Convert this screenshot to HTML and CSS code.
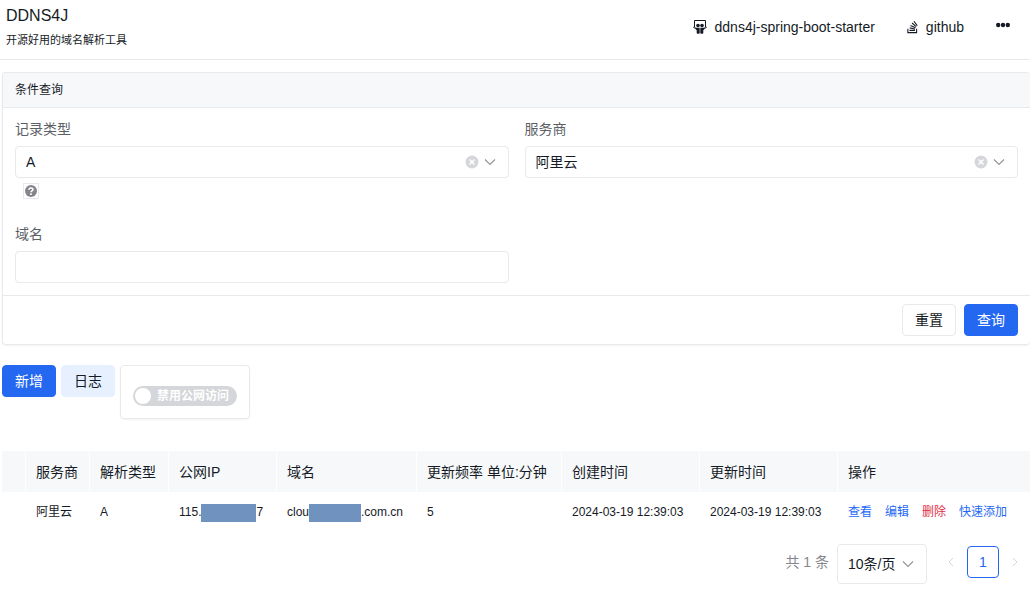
FILE: index.html
```html
<!DOCTYPE html>
<html lang="zh-CN">
<head>
<meta charset="utf-8">
<title>DDNS4J</title>
<link rel="stylesheet" href="styles.css">
</head>
<body>
<header class="header">
  <div class="brand">
    <h1 class="brand-title">DDNS4J</h1>
    <p class="brand-sub">开源好用的域名解析工具</p>
  </div>
  <nav class="nav">
    <a class="nav-link" href="#starter">
      <svg class="nav-icon" width="14" height="14" viewBox="0 0 14 14" aria-hidden="true">
        <path d="M1.500 7.500V.5h11v7" fill="none" stroke="currentColor" stroke-width="1"/>
        <path d="M.3 7.200q1.500 1.300 2.700 1M13.700 7.200q-1.500 1.300-2.700 1" fill="none" stroke="currentColor" stroke-width="1"/>
        <circle cx="5" cy="5.500" r="1.800" fill="currentColor"/><circle cx="9" cy="5.500" r="1.800" fill="currentColor"/>
        <path d="M2.300 7.800h4.400v5.500q-1.400 1-3 0V10.300q-1.400-.8-1.400-2.500zM11.700 7.800H7.300v5.500q1.400 1 3 0V10.300q1.400-.8 1.400-2.500z" fill="currentColor"/>
      </svg>
      <span>ddns4j-spring-boot-starter</span>
    </a>
    <a class="nav-link" href="#github">
      <svg class="nav-icon" width="11" height="14" viewBox="0 0 384 512" aria-hidden="true">
        <path fill="currentColor" d="M290.7 311L95 269.700 86.800 309l195.700 41zm51-87L188.200 95.700l-25.500 30.800 153.500 128.300zm-31.200 39.700L129.200 179l-16.700 36.500L293.700 300zM262 32l-32 24 119.300 160.300 32-24zm20.500 328h-200v39.700h200zm39.700 80H42.700V320h-40v160h359.500V320h-40z"/>
      </svg>
      <span>github</span>
    </a>
    <button class="more" type="button" aria-label="更多">
      <svg width="14" height="6" viewBox="0 0 14 6" aria-hidden="true"><g fill="currentColor"><circle cx="2.200" cy="3" r="2.200"/><circle cx="7" cy="3" r="2.200"/><circle cx="11.800" cy="3" r="2.200"/></g></svg>
    </button>
  </nav>
</header>

<main class="main">
  <form class="panel">
    <h2 class="panel-head">条件查询</h2>
    <div class="panel-body">
      <div class="field">
        <label class="label" for="type">记录类型</label>
        <div class="control">
          <select class="select" id="type"><option>A</option></select>
          <button class="clear" type="button" aria-label="清除记录类型"><svg width="14" height="14" viewBox="0 0 14 14"><circle cx="7" cy="7" r="6.500" fill="#d4d6d9"/><path d="M4.500 4.500l5 5m0-5l-5 5" stroke="#fff" stroke-width="1.500"/></svg></button>
          <svg class="chevron" width="12" height="12" viewBox="0 0 12 12" aria-hidden="true"><path d="M1 3.500l5 5 5-5"/></svg>
        </div>
        <button class="help" type="button" aria-label="帮助"><svg width="12" height="12" viewBox="0 0 12 12"><circle cx="6" cy="6" r="6" fill="#84868c"/><path d="M4 4.800C4 2.400 8 2.400 8 4.600 8 5.900 6 5.800 6 7.200M6 8.300v1.600" fill="none" stroke="#fff" stroke-width="1.600"/></svg></button>
      </div>
      <div class="field">
        <label class="label" for="vendor">服务商</label>
        <div class="control">
          <select class="select" id="vendor"><option>阿里云</option></select>
          <button class="clear" type="button" aria-label="清除服务商"><svg width="14" height="14" viewBox="0 0 14 14"><circle cx="7" cy="7" r="6.500" fill="#d4d6d9"/><path d="M4.500 4.500l5 5m0-5l-5 5" stroke="#fff" stroke-width="1.500"/></svg></button>
          <svg class="chevron" width="12" height="12" viewBox="0 0 12 12" aria-hidden="true"><path d="M1 3.500l5 5 5-5"/></svg>
        </div>
      </div>
      <div class="field">
        <label class="label" for="domain">域名</label>
        <input class="input" id="domain" type="text">
      </div>
    </div>
    <div class="panel-foot">
      <button class="btn" type="reset">重置</button>
      <button class="btn btn-primary" type="button">查询</button>
    </div>
  </form>

  <div class="toolbar">
    <button class="btn btn-primary" type="button">新增</button>
    <button class="btn btn-light" type="button">日志</button>
    <div class="switch-box">
      <label class="switch"><input class="switch-input" type="checkbox" role="switch"><span>禁用公网访问</span></label>
    </div>
  </div>

  <table class="table">
    <colgroup><col class="c-check"><col class="c-vendor"><col class="c-type"><col class="c-ip"><col class="c-domain"><col class="c-freq"><col class="c-time"><col class="c-time"><col></colgroup>
    <thead>
      <tr><th></th><th>服务商</th><th>解析类型</th><th>公网IP</th><th>域名</th><th>更新频率 单位:分钟</th><th>创建时间</th><th>更新时间</th><th>操作</th></tr>
    </thead>
    <tbody>
      <tr>
        <td></td><td>阿里云</td><td>A</td>
        <td>115.<span class="mask mask-ip"></span>7</td>
        <td>clou<span class="mask mask-domain"></span>.com.cn</td>
        <td>5</td><td>2024-03-19 12:39:03</td><td>2024-03-19 12:39:03</td>
        <td><div class="actions"><button class="act" type="button">查看</button><button class="act" type="button">编辑</button><button class="act act-danger" type="button">删除</button><button class="act" type="button">快速添加</button></div></td>
      </tr>
    </tbody>
  </table>

  <div class="pager">
    <span class="total">共 1 条</span>
    <div class="control page-size">
      <select class="select" aria-label="每页条数"><option>10条/页</option></select>
      <svg class="chevron" width="12" height="12" viewBox="0 0 12 12" aria-hidden="true"><path d="M1 3.500l5 5 5-5"/></svg>
    </div>
    <div class="pages">
      <button class="arrow" type="button" disabled aria-label="上一页"><svg width="6" height="10" viewBox="0 0 6 10"><path d="M5 1L1 5l4 4"/></svg></button>
      <button class="page" type="button" aria-current="page">1</button>
      <button class="arrow" type="button" disabled aria-label="下一页"><svg width="6" height="10" viewBox="0 0 6 10"><path d="M1 1l4 4-4 4"/></svg></button>
    </div>
  </div>
</main>
</body>
</html>
```
FILE: styles.css
```css
* { box-sizing: border-box; }

body {
  margin: 0;
  background: #fff;
  color: #151b26;
  font: 14px/20px "Liberation Sans", "Noto Sans CJK SC", sans-serif;
}

button, input, select {
  margin: 0;
  padding: 0;
  border: 0;
  background: none;
  color: inherit;
  font: inherit;
}

svg { display: block; flex: none; }

.header {
  display: flex;
  justify-content: space-between;
  height: 60px;
  padding: 6px 20px 0 6px;
  border-bottom: 1px solid #e8e9eb;
}
.brand-title { margin: 0; font-size: 16px; font-weight: 400; line-height: 20px; }
.brand-sub { margin: 6px 0 0; font-size: 11px; line-height: 16px; }

.nav { display: flex; height: 42px; align-items: center; }
.nav-link {
  display: flex;
  align-items: center;
  gap: 8px;
  margin-right: 32px;
  color: inherit;
  text-decoration: none;
}
.more { height: 18px; display: flex; align-items: center; padding-bottom: 4px; }

.main { padding: 12px 0 0 2px; }

.panel {
  border: 1px solid #e8e9eb;
  border-right: 0;
  border-radius: 4px;
  box-shadow: 0 1px 2px rgba(0, 0, 0, .05);
}
.panel-head {
  margin: 0;
  padding: 8px 12px;
  background: #f7f8fa;
  border-bottom: 1px solid #e8e9eb;
  border-radius: 4px 4px 0 0;
  font-size: 12px;
  font-weight: 400;
  line-height: 18px;
}
.panel-body {
  display: grid;
  grid-template-columns: 1fr 1fr;
  gap: 26px 16px;
  padding: 12px;
}
.label { display: block; margin-bottom: 8px; color: #5c5f66; line-height: 18px; }
.control {
  display: flex;
  align-items: center;
  height: 32px;
  padding: 0 12px 0 10px;
  border: 1px solid #e8e9eb;
  border-radius: 4px;
}
.select { flex: 1; min-width: 0; appearance: none; outline: none; }
.clear { margin-right: 5px; }
.chevron path { fill: none; stroke: #94969b; stroke-width: 1.2; }
.input {
  display: block;
  width: 100%;
  height: 32px;
  padding: 0 10px;
  border: 1px solid #e8e9eb;
  border-radius: 4px;
}
.help {
  display: flex;
  align-items: center;
  justify-content: center;
  width: 16px;
  height: 16px;
  margin: 5px 0 0 8px;
  border: 1px solid #e8e9eb;
}
.panel-foot {
  display: flex;
  justify-content: flex-end;
  gap: 8px;
  padding: 8px 12px;
  border-top: 1px solid #e8e9eb;
}

.btn {
  height: 32px;
  padding: 0 12px;
  border: 1px solid #e8e9eb;
  border-radius: 4px;
  background: #fff;
}
.btn-primary { border-color: #2468f2; background: #2468f2; color: #fff; }
.btn-light { border-color: #e6f0ff; background: #e6f0ff; }

.toolbar { display: flex; align-items: flex-start; gap: 5px; margin-top: 20px; }
.switch-box {
  padding: 20px 12px 12px;
  border: 1px solid #e8e9eb;
  border-radius: 4px;
  box-shadow: 0 1px 2px rgba(0, 0, 0, .05);
}
.switch {
  display: flex;
  align-items: center;
  gap: 6px;
  height: 20px;
  padding: 0 8px 0 2px;
  border-radius: 10px;
  background: #d4d6d9;
  color: #fff;
  font-size: 12px;
  font-weight: 700;
}
.switch-input {
  appearance: none;
  width: 16px;
  height: 16px;
  border-radius: 50%;
  background: #fff;
}

.table {
  width: 100%;
  margin-top: 32px;
  border-collapse: separate;
  border-spacing: 0;
  table-layout: fixed;
  text-align: left;
}
.c-check { width: 24px; }
.c-vendor { width: 64px; }
.c-type { width: 79px; }
.c-ip { width: 108px; }
.c-domain { width: 140px; }
.c-freq { width: 145px; }
.c-time { width: 138px; }
.table th {
  height: 41px;
  padding: 0 0 0 10px;
  background: #f7f8fa;
  border-right: 1px solid #fff;
  font-weight: 400;
  white-space: nowrap;
}
.table th:last-child { border-right: 0; }
.table td {
  height: 40px;
  padding: 0 0 0 10px;
  font-size: 12px;
  white-space: nowrap;
}
.mask { display: inline-block; height: 18px; background: #7092be; vertical-align: middle; }
.mask-ip { width: 55px; }
.mask-domain { width: 52px; }
.actions { display: flex; gap: 13px; }
.act { color: #2468f2; }
.act-danger { color: #e02f47; }

.pager {
  display: flex;
  justify-content: flex-end;
  align-items: flex-start;
  margin-top: 12px;
  padding-right: 12px;
}
.total { margin-right: 8px; color: #84868c; line-height: 36px; }
.page-size { width: 90px; height: 40px; }
.pages { display: flex; align-items: center; gap: 13px; height: 36px; margin-left: 21px; }
.page {
  width: 32px;
  height: 32px;
  border: 1px solid #2468f2;
  border-radius: 4px;
  color: #2468f2;
}
.arrow path { fill: none; stroke: #d4d6d9; stroke-width: 1; }
```
